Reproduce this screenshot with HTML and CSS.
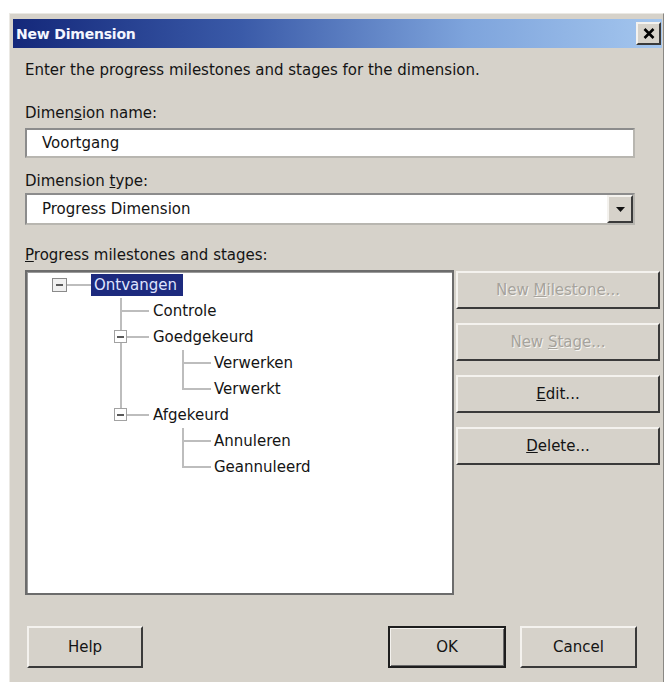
FILE: index.html
```html
<!DOCTYPE html>
<html lang="en">
<head>
<meta charset="utf-8">
<title>New Dimension</title>
<link rel="stylesheet" href="styles.css">
</head>
<body>
<div class="dialog">
  <div class="titlebar">
    <span class="title">New Dimension</span>
    <span class="close-btn">
      <svg width="12" height="11" viewBox="0 0 12 11"><path d="M1.5 1 L10.5 10 M10.5 1 L1.5 10" stroke="#000" stroke-width="2.6"/></svg>
    </span>
  </div>

  <div class="content">
    <p class="intro">Enter the progress milestones and stages for the dimension.</p>

    <div class="label label-name">Dimen<u>s</u>ion name:</div>
    <div class="textbox">Voortgang</div>

    <div class="label label-type">Dimension <u>t</u>ype:</div>
    <div class="combo">
      <span class="combo-value">Progress Dimension</span>
      <span class="combo-btn">
        <svg width="9" height="5" viewBox="0 0 9 5"><path d="M0 0 H9 L4.5 5 Z" fill="#111"/></svg>
      </span>
    </div>

    <div class="label label-tree"><u>P</u>rogress milestones and stages:</div>
    <div class="main">
      <div class="treeview">
        <div class="row root-row">
          <span class="exp root-exp"></span>
          <span class="root-line"></span>
          <span class="item selected">Ontvangen</span>
        </div>
        <ul class="branch level1">
          <li>
            <div class="row"><span class="item">Controle</span></div>
          </li>
          <li>
            <span class="exp"></span>
            <div class="row"><span class="item">Goedgekeurd</span></div>
            <ul class="branch level2">
              <li><div class="row"><span class="item">Verwerken</span></div></li>
              <li class="last"><div class="row"><span class="item">Verwerkt</span></div></li>
            </ul>
          </li>
          <li class="last">
            <span class="exp"></span>
            <div class="row"><span class="item">Afgekeurd</span></div>
            <ul class="branch level2">
              <li><div class="row"><span class="item">Annuleren</span></div></li>
              <li class="last"><div class="row"><span class="item">Geannuleerd</span></div></li>
            </ul>
          </li>
        </ul>
      </div>

      <div class="side-buttons">
        <div class="btn side disabled"><span>New <u>M</u>ilestone...</span></div>
        <div class="btn side disabled"><span>New <u>S</u>tage...</span></div>
        <div class="btn side"><span><u>E</u>dit...</span></div>
        <div class="btn side"><span><u>D</u>elete...</span></div>
      </div>
    </div>

    <div class="footer">
      <div class="btn help"><span>Help</span></div>
      <div class="footer-right">
        <div class="btn ok"><span>OK</span></div>
        <div class="btn cancel"><span>Cancel</span></div>
      </div>
    </div>
  </div>
</div>
</body>
</html>
```

FILE: styles.css
```css
html, body {
  margin: 0;
  padding: 0;
}

body {
  width: 668px;
  height: 682px;
  overflow: hidden;
  background: #ffffff;
  font-family: "DejaVu Sans", "Liberation Sans", sans-serif;
  font-size: 15px;
  color: #141414;
}

/* window frame */
.dialog {
  margin: 13px 0 0 9px;
  width: 655px;
  height: 690px;
  box-sizing: border-box;
  padding: 5px 1px 0 3px;
  background: #d6d2ca;
  border: 1px solid;
  border-color: #ebe9e4 #8a8884 #8a8884 #ebe9e4;
}

/* caption */
.titlebar {
  height: 29px;
  display: flex;
  align-items: center;
  justify-content: space-between;
  padding: 0 1px 0 3px;
  background: linear-gradient(to right, #14287a 0%, #3a5aa8 35%, #7ea4dc 70%, #a4c6ee 100%);
}

.title {
  color: #f4f6ff;
  font-weight: bold;
  font-size: 14px;
  letter-spacing: -0.2px;
}

.close-btn {
  width: 25px;
  height: 23px;
  box-sizing: border-box;
  display: flex;
  align-items: center;
  justify-content: center;
  background: #d6d2ca;
  border: 2px solid;
  border-color: #f4f2ee #3a3a3a #3a3a3a #f4f2ee;
}

/* dialog body */
.content {
  padding-left: 12px;
}

.intro {
  margin: 12px 0 0;
  line-height: 20px;
}

.label {
  line-height: 20px;
}

.label-name { margin-top: 23px; }
.label-type { margin-top: 13px; }
.label-tree { margin-top: 20px; }

.textbox,
.combo {
  width: 610px;
  box-sizing: border-box;
  background: #ffffff;
  border: 2px solid;
  border-color: #8c8c8c #b8b6b0 #b8b6b0 #8c8c8c;
}

.textbox {
  margin-top: 5px;
  height: 30px;
  line-height: 26px;
  padding-left: 15px;
}

.combo {
  margin-top: 2px;
  height: 32px;
  display: flex;
  align-items: stretch;
  justify-content: space-between;
}

.combo-value {
  line-height: 28px;
  padding-left: 15px;
}

.combo-btn {
  width: 26px;
  box-sizing: border-box;
  display: flex;
  align-items: center;
  justify-content: center;
  background: #d6d2ca;
  border: 2px solid;
  border-color: #f4f2ee #3a3a3a #3a3a3a #f4f2ee;
}

/* tree + command column */
.main {
  margin-top: 5px;
  display: flex;
  align-items: flex-start;
}

.treeview {
  width: 429px;
  height: 325px;
  box-sizing: border-box;
  background: #ffffff;
  border: 2px solid #6c6c6c;
  box-shadow: inset 1px 1px 0 #9a9a9a;
}

.row {
  height: 26px;
  display: flex;
  align-items: center;
}

.root-row {
  padding-left: 25px;
}

.exp {
  width: 13px;
  height: 13px;
  box-sizing: border-box;
  background: #ffffff;
  border: 1px solid #a2a2a2;
  display: flex;
  align-items: center;
  justify-content: center;
}

.exp::before {
  content: "";
  width: 7px;
  height: 2px;
  background: #5a5a5a;
}

.root-exp {
  width: 15px;
  height: 14px;
  background: #f0f0f0;
  border-color: #8a8a8a;
}

.root-line {
  width: 24px;
  height: 2px;
  background: #bdbdbd;
}

.item {
  line-height: 22px;
  white-space: nowrap;
}

.item.selected {
  background: #1d2a7e;
  color: #dfe4ff;
  padding: 0 3px;
  width: 86px;
}

.branch {
  list-style: none;
  margin: 0;
  padding: 0;
}

.branch.level1 { margin-left: 93px; }
.branch.level2 { margin-left: 29px; }

.branch > li {
  position: relative;
  padding-left: 33px;
}

.branch.level2 > li { padding-left: 32px; }

/* horizontal connector into the item */
.branch > li::before {
  content: "";
  position: absolute;
  left: 0;
  top: 12px;
  width: 29px;
  height: 2px;
  background: #bdbdbd;
}

/* vertical connector down the sibling column */
.branch > li::after {
  content: "";
  position: absolute;
  left: 0;
  top: 0;
  bottom: 0;
  width: 2px;
  background: #bdbdbd;
}

.branch > li.last::after {
  bottom: auto;
  height: 14px;
}

/* collapse box sits over the connectors */
.branch > li > .exp {
  position: absolute;
  left: -6px;
  top: 6px;
  z-index: 1;
}

.side-buttons {
  margin-left: 2px;
  padding-top: 1px;
  width: 204px;
  display: flex;
  flex-direction: column;
  gap: 14px;
}

.btn {
  box-sizing: border-box;
  display: flex;
  align-items: center;
  justify-content: center;
  background: #d6d2ca;
  border: 2px solid;
  border-color: #f4f2ee #3a3a3a #3a3a3a #f4f2ee;
  color: #141414;
  white-space: nowrap;
}

.btn.side {
  height: 38px;
}

.btn.disabled {
  color: #a6a39c;
  text-shadow: 1px 1px 0 #f6f5f2;
}

.footer {
  margin-top: 31px;
  margin-left: 2px;
  width: 610px;
  display: flex;
  justify-content: space-between;
}

.footer .btn {
  height: 42px;
}

.btn.help {
  width: 116px;
}

.footer-right {
  display: flex;
  gap: 14px;
}

.btn.ok {
  width: 118px;
  border-color: #1e1e1e;
  box-shadow: inset 1px 1px 0 #f4f2ee, inset -1px -1px 0 #6a6a6a;
}

.btn.cancel {
  width: 117px;
}
```
